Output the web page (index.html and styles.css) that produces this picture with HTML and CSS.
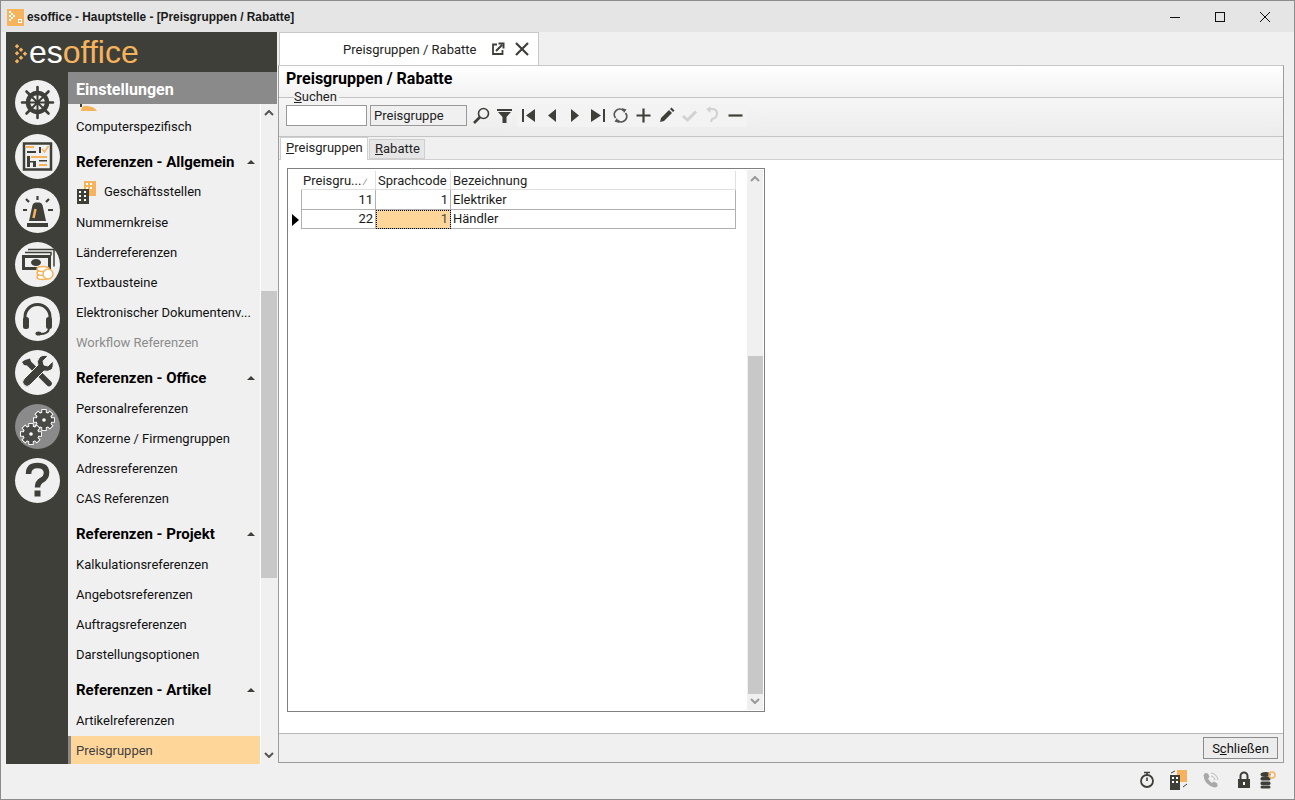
FILE: index.html
```html
<!DOCTYPE html>
<html lang="de">
<head>
<meta charset="utf-8">
<title>esoffice</title>
<link rel="stylesheet" href="styles.css">
</head>
<body>
<div class="window">
  <header class="titlebar">
    <svg class="app-icon" width="17" height="17" viewBox="0 0 17 17"><rect width="17" height="17" fill="#f7b35c"/><g fill="#fff"><rect x="2" y="2" width="2" height="2"/><rect x="4" y="4" width="2" height="2"/><rect x="6" y="6" width="2" height="2"/><rect x="4" y="8" width="2" height="2"/><rect x="2" y="10" width="2" height="2"/><rect x="2" y="6" width="2" height="2"/></g><rect x="11.500" y="10.500" width="3" height="3" fill="none" stroke="#fff"/></svg>
    <span class="title-text">esoffice - Hauptstelle - [Preisgruppen / Rabatte]</span>
    <div class="win-buttons">
      <svg width="12" height="12" viewBox="0 0 12 12"><path d="M1 6.500h10" stroke="#111" fill="none"/></svg>
      <svg width="12" height="12" viewBox="0 0 12 12"><rect x="1.500" y="1.500" width="9" height="9" stroke="#111" fill="none"/></svg>
      <svg width="12" height="12" viewBox="0 0 12 12"><path d="M1 1l10 10M11 1L1 11" stroke="#111" fill="none"/></svg>
    </div>
  </header>

  <div class="workspace">
    <aside class="sidebar">
      <div class="logo-row">
        <svg class="logo-mark" width="14" height="20" viewBox="0 0 14 20"><g fill="#f7b35c"><path d="M3 0l2.200 2.200L3 4.400.8 2.200z"/><path d="M7 3.500l2.200 2.200L7 7.900 4.800 5.700z"/><path d="M11 7.500l2.200 2.200L11 11.900 8.800 9.700z"/><path d="M3 7l2.200 2.200L3 11.400.8 9.200z"/><path d="M7 11.500l2.200 2.200L7 15.900 4.800 13.700z"/><path d="M3 15l2.200 2.200L3 19.400.8 17.200z"/></g></svg>
        <span class="logo-text"><span class="logo-es">es</span>office</span>
      </div>
      <div class="side-body">
        <nav class="rail">
          <div class="rail-btn">
            <svg width="45" height="45" viewBox="0 0 45 45"><g fill="none" stroke="#3f3f3a"><circle cx="22.500" cy="22.500" r="9.500" stroke-width="4.500"/><path d="M22.500 13v19M13 22.500h19M15.800 15.800l13.400 13.400M29.200 15.800L15.800 29.200" stroke-width="2"/><path d="M22.500 7v6M22.500 32v6M7 22.500h6M32 22.500h6M11.500 11.500l4 4M29.500 29.500l4 4M33.500 11.500l-4 4M15.500 29.500l-4 4" stroke-width="2.600" stroke-linecap="round"/></g></svg>
          </div>
          <div class="rail-btn">
            <svg width="45" height="45" viewBox="0 0 45 45"><rect x="9" y="9.500" width="27" height="26" fill="none" stroke="#3f3f3a" stroke-width="2.500"/><g fill="#f7b35c"><rect x="11" y="12" width="8" height="2"/><rect x="16" y="22" width="16" height="2"/><rect x="24" y="30" width="8" height="2"/></g><g fill="#3f3f3a"><rect x="12" y="17" width="9" height="2"/><rect x="12" y="22" width="3" height="11"/><rect x="18" y="27" width="3" height="6"/><rect x="24" y="13" width="2" height="6"/><rect x="12" y="27" width="9" height="1.500"/><rect x="24" y="26" width="8" height="1.500"/></g><path d="M27 15l2.500 3 4-6" fill="none" stroke="#f7b35c" stroke-width="1.500"/></svg>
          </div>
          <div class="rail-btn">
            <svg width="45" height="45" viewBox="0 0 45 45"><path d="M14 33l3.500-16q1-2.500 3-2.500h4q2 0 3 2.500L31 33z" fill="#3f3f3a"/><rect x="12" y="35" width="21" height="4" fill="#3f3f3a"/><path d="M20.500 21l-2 9" stroke="#f7b35c" stroke-width="2.500"/><path d="M22.500 8v4M11 11l3 3M34 11l-3 3M8 22h4M33 22h5" stroke="#3f3f3a" stroke-width="2.200" fill="none"/></svg>
          </div>
          <div class="rail-btn">
            <svg width="45" height="45" viewBox="0 0 45 45"><g fill="none" stroke="#3f3f3a" stroke-width="1.500"><path d="M13 7.500h26v17M10 10.500h26v3"/></g><rect x="7" y="13" width="29" height="15" fill="#3f3f3a"/><rect x="10" y="16" width="23" height="9" fill="#f0f0f0"/><ellipse cx="21" cy="20.500" rx="5" ry="3.500" fill="#3f3f3a"/><g fill="#fff" stroke="#f7b35c" stroke-width="1.500"><ellipse cx="28" cy="35" rx="6" ry="2.500"/><ellipse cx="28" cy="31" rx="6" ry="2.500"/><ellipse cx="28" cy="27" rx="6" ry="2.500"/><circle cx="33" cy="32" r="5"/></g></svg>
          </div>
          <div class="rail-btn">
            <svg width="45" height="45" viewBox="0 0 45 45"><path d="M10 27v-6a12.500 12.500 0 0 1 25 0v6" fill="none" stroke="#3f3f3a" stroke-width="3"/><rect x="8" y="21" width="6" height="12" rx="2.500" fill="#3f3f3a"/><rect x="31" y="21" width="6" height="12" rx="2.500" fill="#3f3f3a"/><path d="M34 33q-1 5-9 5" fill="none" stroke="#3f3f3a" stroke-width="2"/><ellipse cx="23.500" cy="37.500" rx="3" ry="2" fill="#3f3f3a"/></svg>
          </div>
          <div class="rail-btn">
            <svg width="45" height="45" viewBox="0 0 45 45"><path d="M10 10l-3 2 2 3 3 .5 20 20q2 2 4 0t0-4l-20-20-1-3z" fill="#3f3f3a"/><path d="M38 11l-5 5-4-1-1-4 5-5q-6-2-9 2t-1 7L9 29q-3 3 0 6t6 0l14-14q4 1 7-1t2-9z" fill="#3f3f3a" stroke="#f0f0f0" stroke-width="1"/></svg>
          </div>
          <div class="rail-btn rail-btn-active">
            <svg width="45" height="45" viewBox="0 0 45 45"><defs><g id="gear"><circle r="7.500"/><rect x="-1.800" y="-10" width="3.600" height="20"/><rect x="-1.800" y="-10" width="3.600" height="20" transform="rotate(45)"/><rect x="-1.800" y="-10" width="3.600" height="20" transform="rotate(90)"/><rect x="-1.800" y="-10" width="3.600" height="20" transform="rotate(135)"/></g></defs><use href="#gear" transform="translate(29 16)" fill="#fff" stroke="#fff" stroke-width="1.800"/><use href="#gear" transform="translate(29 16)" fill="#4a4a46"/><use href="#gear" transform="translate(16 30)" fill="#fff" stroke="#fff" stroke-width="1.800"/><use href="#gear" transform="translate(16 30)" fill="#4a4a46"/><g fill="#fff"><circle cx="29" cy="16" r="1.800"/><circle cx="16" cy="30" r="1.800"/></g></svg>
          </div>
          <div class="rail-btn">
            <svg width="45" height="45" viewBox="0 0 45 45"><path d="M13.500 16q0-8.500 9-8.500t9 7.500q0 4.500-4.500 7t-4.500 7.500" fill="none" stroke="#3f3f3a" stroke-width="5.500"/><rect x="19.500" y="32.500" width="6" height="6" fill="#3f3f3a"/></svg>
          </div>
        </nav>
        <div class="menu-panel">
          <div class="menu-title">Einstellungen</div>
          <div class="menu-body">
            <div class="menu-list">
              <div class="menu-clip"><svg width="22" height="7" viewBox="0 0 22 7"><path d="M5 7q0-6 7-5t9 5z" fill="#f7b35c"/><rect x="4" y="0" width="2" height="3" fill="#3f3f3a"/></svg></div>
              <div class="menu-item">Computerspezifisch</div>
              <div class="menu-head">Referenzen - Allgemein<span class="tri"></span></div>
              <div class="menu-item menu-item-icon">
                <svg width="22" height="24" viewBox="0 0 22 24"><rect x="8" y="0" width="12" height="15" fill="#f7b35c"/><g fill="#fff"><rect x="10" y="2" width="2" height="2"/><rect x="14" y="2" width="2" height="2"/><rect x="10" y="6" width="2" height="2"/><rect x="14" y="6" width="2" height="2"/></g><rect x="1" y="8" width="12" height="15" fill="#3f3f3a"/><g fill="#fff"><rect x="3" y="10" width="2" height="2"/><rect x="8" y="10" width="2" height="2"/><rect x="3" y="14" width="2" height="2"/><rect x="8" y="14" width="2" height="2"/><rect x="3" y="18" width="2" height="2"/><rect x="8" y="18" width="2" height="2"/></g></svg>
                Geschäftsstellen
              </div>
              <div class="menu-item">Nummernkreise</div>
              <div class="menu-item">Länderreferenzen</div>
              <div class="menu-item">Textbausteine</div>
              <div class="menu-item">Elektronischer Dokumentenv...</div>
              <div class="menu-item menu-item-off">Workflow Referenzen</div>
              <div class="menu-head">Referenzen - Office<span class="tri"></span></div>
              <div class="menu-item">Personalreferenzen</div>
              <div class="menu-item">Konzerne / Firmengruppen</div>
              <div class="menu-item">Adressreferenzen</div>
              <div class="menu-item">CAS Referenzen</div>
              <div class="menu-head">Referenzen - Projekt<span class="tri"></span></div>
              <div class="menu-item">Kalkulationsreferenzen</div>
              <div class="menu-item">Angebotsreferenzen</div>
              <div class="menu-item">Auftragsreferenzen</div>
              <div class="menu-item">Darstellungsoptionen</div>
              <div class="menu-head">Referenzen - Artikel<span class="tri"></span></div>
              <div class="menu-item">Artikelreferenzen</div>
              <div class="menu-item menu-item-active">Preisgruppen</div>
            </div>
            <div class="menu-scroll">
              <svg class="sb-up" width="10" height="6" viewBox="0 0 10 6"><path d="M1 5l4-4 4 4" fill="none" stroke="#555" stroke-width="2"/></svg>
              <div class="menu-thumb"></div>
              <svg class="sb-down" width="10" height="6" viewBox="0 0 10 6"><path d="M1 1l4 4 4-4" fill="none" stroke="#555" stroke-width="2"/></svg>
            </div>
          </div>
        </div>
      </div>
    </aside>

    <main class="main">
      <div class="doc-tabs">
        <div class="doc-tab">
          <span class="doc-tab-label">Preisgruppen / Rabatte</span>
          <svg width="14" height="14" viewBox="0 0 14 14"><path d="M6 2.500H2v9.500h9.500V8" fill="none" stroke="#3f3f3a" stroke-width="1.800"/><path d="M5 9l6-6M7.500 1.500H12.500V6.500" fill="none" stroke="#3f3f3a" stroke-width="2"/></svg>
          <svg width="14" height="14" viewBox="0 0 14 14"><path d="M1 1l12 12M13 1L1 13" fill="none" stroke="#3f3f3a" stroke-width="2.200"/></svg>
        </div>
      </div>
      <div class="doc-panel">
        <div class="doc-head">
          <h1 class="doc-title">Preisgruppen / Rabatte</h1>
          <div class="search-legend"><span class="legend-text"><u>S</u>uchen</span></div>
        </div>
        <div class="toolbar">
          <div class="search-input"></div>
          <div class="search-field">Preisgruppe</div>
          <svg class="tool" width="23" height="23" viewBox="0 0 23 23"><circle cx="13.500" cy="9.500" r="5" fill="none" stroke="#3f3f3a" stroke-width="1.600"/><path d="M10 13l-6 6" stroke="#3f3f3a" stroke-width="2.600"/></svg>
          <svg class="tool" width="23" height="23" viewBox="0 0 23 23"><path d="M4 5h15v2H4zM5 8h13l-4.500 5v6h-4v-6z" fill="#3f3f3a"/></svg>
          <div class="nav-tools">
            <svg class="tool" width="23" height="23" viewBox="0 0 23 23"><path d="M5 5h2v13H5zM18 5v13l-9-6.500z" fill="#3f3f3a"/></svg>
            <svg class="tool" width="23" height="23" viewBox="0 0 23 23"><path d="M16 5v13l-8-6.500z" fill="#3f3f3a"/></svg>
            <svg class="tool" width="23" height="23" viewBox="0 0 23 23"><path d="M8 5v13l8-6.500z" fill="#3f3f3a"/></svg>
            <svg class="tool" width="23" height="23" viewBox="0 0 23 23"><path d="M17 5h2v13h-2zM5 5v13l10-6.500z" fill="#3f3f3a"/></svg>
            <svg class="tool" width="23" height="23" viewBox="0 0 23 23"><path d="M6.500 14a5.500 5.500 0 0 1 8-7.500M16.500 9a5.500 5.500 0 0 1-8 7.500" fill="none" stroke="#555" stroke-width="1.800"/><path d="M13 4l4.500 1.500L15 9zM10 19l-4.500-1.500L8 14z" fill="#555"/></svg>
            <svg class="tool" width="23" height="23" viewBox="0 0 23 23"><path d="M4.500 11.500h14M11.500 4.500v14" stroke="#3f3f3a" stroke-width="2.200"/></svg>
            <svg class="tool" width="23" height="23" viewBox="0 0 23 23"><path d="M5 18l1-4 8-8 3 3-8 8z" fill="#3f3f3a"/><path d="M15 5l1.500-1.500 3 3L18 8z" fill="#3f3f3a"/></svg>
            <svg class="tool" width="23" height="23" viewBox="0 0 23 23"><path d="M5 12l4.500 4L18 7.500" fill="none" stroke="#d2d2d2" stroke-width="3"/></svg>
            <svg class="tool" width="23" height="23" viewBox="0 0 23 23"><path d="M6 5h5q5 0 5 4.500T11 15l-1 3" fill="none" stroke="#d2d2d2" stroke-width="2.200"/><path d="M9.500 2v7L5.500 5.500z" fill="#d2d2d2"/></svg>
            <svg class="tool" width="23" height="23" viewBox="0 0 23 23"><path d="M4.500 11.500h14" stroke="#3f3f3a" stroke-width="2.200"/></svg>
          </div>
        </div>
        <div class="sub-tabs">
          <div class="sub-tab sub-tab-active"><u>P</u>reisgruppen</div>
          <div class="sub-tab sub-tab-plain"><u>R</u>abatte</div>
        </div>
        <div class="tab-page">
          <div class="grid-box">
            <div class="grid">
              <div class="grid-row grid-header">
                <div class="cell-ind"></div>
                <div class="cell cell-a">Preisgru...<span class="sort">∕</span></div>
                <div class="cell cell-b">Sprachcode</div>
                <div class="cell cell-c">Bezeichnung</div>
              </div>
              <div class="grid-row grid-row-tall">
                <div class="cell-ind"></div>
                <div class="cell cell-a cell-num">11</div>
                <div class="cell cell-b cell-num">1</div>
                <div class="cell cell-c">Elektriker</div>
              </div>
              <div class="grid-row">
                <div class="cell-ind"><span class="row-marker"></span></div>
                <div class="cell cell-a cell-num">22</div>
                <div class="cell cell-b cell-num cell-focus">1</div>
                <div class="cell cell-c">Händler</div>
              </div>
            </div>
            <div class="grid-scroll">
              <svg class="sb-up" width="10" height="6" viewBox="0 0 10 6"><path d="M1 5l4-4 4 4" fill="none" stroke="#999" stroke-width="2"/></svg>
              <div class="grid-thumb"></div>
              <svg class="sb-down" width="10" height="6" viewBox="0 0 10 6"><path d="M1 1l4 4 4-4" fill="none" stroke="#999" stroke-width="2"/></svg>
            </div>
          </div>
        </div>
        <div class="doc-foot"><button class="close-btn" type="button">S<u>c</u>hließen</button></div>
      </div>
    </main>
  </div>

  <footer class="statusbar">
    <svg width="18" height="18" viewBox="0 0 18 18"><circle cx="9" cy="10" r="6" fill="none" stroke="#3f3f3a" stroke-width="1.800"/><path d="M6 1.500h6M9 2v3M9 6.500V10" stroke="#3f3f3a" stroke-width="1.600" fill="none"/></svg>
    <svg width="22" height="20" viewBox="0 0 22 20"><rect x="9" y="0" width="10" height="12" fill="#f7b35c"/><rect x="2" y="5" width="10" height="15" fill="#3f3f3a"/><g fill="#fff"><rect x="4" y="7" width="2" height="2"/><rect x="8" y="7" width="2" height="2"/><rect x="4" y="11" width="2" height="2"/><rect x="8" y="11" width="2" height="2"/></g><path d="M15 17l4-3M3 3l4-2" stroke="#3f3f3a" fill="none"/></svg>
    <svg width="18" height="18" viewBox="0 0 18 18"><path d="M3 2l3 .5 1.500 3.500-1.500 1.500q1.500 3 4 4.500l1.800-1.500 3.500 2 .2 2.500q-1 1.500-3 1.500Q2.500 14 1.500 4.500 2 3 3 2z" fill="#a8a8a8"/><path d="M9 2q6 1 7 7M9 5q3 .5 4 4" fill="none" stroke="#c4c4c4" stroke-width="1.200"/></svg>
    <svg class="status-lock" width="16" height="18" viewBox="0 0 16 18"><path d="M4.500 8V5a3.500 3.500 0 0 1 7 0v3" fill="none" stroke="#3f3f3a" stroke-width="2"/><rect x="2" y="8" width="12" height="9" fill="#3f3f3a"/><rect x="7" y="11" width="2" height="3" fill="#fff"/></svg>
    <svg class="status-db" width="18" height="18" viewBox="0 0 18 18"><g fill="#3f3f3a"><ellipse cx="6.500" cy="3.500" rx="5" ry="2.500"/><rect x="1.500" y="6" width="10" height="3.500" rx="1.500"/><rect x="1.500" y="10.500" width="10" height="3.500" rx="1.500"/><rect x="1.500" y="14.500" width="10" height="3" rx="1.500"/></g><circle cx="13" cy="4" r="3" fill="none" stroke="#f7b35c" stroke-width="1.500"/></svg>
  </footer>
</div>
</body>
</html>
```
FILE: styles.css
```css
* { box-sizing: border-box; }
html, body { margin: 0; padding: 0; }
body {
  font-family: Roboto, "Liberation Sans", sans-serif;
  font-size: 13px;
  color: #000;
  background: #f0f0f0;
}
.window {
  width: 1295px;
  height: 800px;
  display: flex;
  flex-direction: column;
  border: 1px solid #8c8c8c;
  background: #f0f0f0;
  overflow: hidden;
}
.titlebar {
  height: 31px;
  flex: none;
  display: flex;
  align-items: center;
  padding-left: 6px;
  background: #e5e5e5;
}
.app-icon { flex: none; margin-top: 1px; }
.title-text {
  margin-left: 3px;
  font-family: "Liberation Sans", sans-serif;
  font-weight: 700;
  font-size: 11.85px;
  color: #1a1a1a;
}
.win-buttons {
  margin-left: auto;
  display: flex;
  gap: 33px;
  padding-right: 23px;
}
.workspace { flex: 1; display: flex; min-height: 0; }
.sidebar {
  width: 271px;
  margin-left: 5px;
  flex: none;
  display: flex;
  flex-direction: column;
  background: #3f3f3a;
}
.logo-row {
  height: 40px;
  flex: none;
  display: flex;
  align-items: center;
  padding-left: 8px;
}
.logo-mark { flex: none; margin-top: 3px; }
.logo-text {
  margin-left: 1px;
  font-family: "Liberation Sans", sans-serif;
  font-size: 32px;
  line-height: 40px;
  color: #f7b35c;
}
.logo-es { color: #fff; }
.side-body { flex: 1; display: flex; min-height: 0; }
.rail {
  width: 62px;
  flex: none;
  display: flex;
  flex-direction: column;
  align-items: center;
  gap: 9px;
  padding-top: 8px;
}
.rail-btn {
  width: 45px;
  height: 45px;
  border-radius: 50%;
  background: #f0f0f0;
  flex: none;
}
.rail-btn svg { display: block; }
.rail-btn-active { background: #8a8a8a; }
.menu-panel {
  flex: 1;
  min-width: 0;
  display: flex;
  flex-direction: column;
  background: #f0f0f0;
}
.menu-title {
  height: 32px;
  flex: none;
  padding-left: 8px;
  background: #8a8a8a;
  color: #fff;
  font-weight: 700;
  font-size: 16px;
  line-height: 35px;
}
.menu-body { flex: 1; display: flex; min-height: 0; }
.menu-list {
  width: 192px;
  flex: none;
  display: flex;
  flex-direction: column;
  overflow: hidden;
}
.menu-clip { height: 7px; flex: none; overflow: hidden; padding-left: 8px; }
.menu-clip svg { display: block; }
.menu-item {
  height: 28px;
  flex: none;
  margin: 1px 0;
  padding-left: 8px;
  line-height: 30px;
  white-space: nowrap;
  color: #111;
}
.menu-item-icon { display: flex; align-items: center; gap: 6px; line-height: 30px; }
.menu-item-icon svg { flex: none; margin-top: 1px; }
.menu-item-off { color: #8c8c8c; }
.menu-item-active {
  background: #ffd699;
  border-left: 3px solid #8a8a8a;
  padding-left: 5px;
  color: #404040;
}
.menu-head {
  height: 30px;
  flex: none;
  margin-top: 6px;
  padding: 0 5px 0 8px;
  display: flex;
  align-items: center;
  justify-content: space-between;
  font-weight: 700;
  font-size: 15px;
  color: #000;
  white-space: nowrap;
}
.tri {
  width: 0;
  height: 0;
  border-left: 4px solid transparent;
  border-right: 4px solid transparent;
  border-bottom: 4px solid #3f3f3a;
}
.menu-scroll {
  width: 17px;
  flex: none;
  position: relative;
  border-left: 1px solid #fff;
  background: #f0f0f0;
}
.sb-up { position: absolute; top: 6px; left: 3px; }
.sb-down { position: absolute; bottom: 6px; left: 3px; }
.menu-thumb {
  position: absolute;
  left: 0;
  top: 187px;
  width: 16px;
  height: 287px;
  background: #c8c8c8;
}
.main {
  flex: 1;
  min-width: 0;
  display: flex;
  flex-direction: column;
  padding: 0 10px 1px 1px;
}
.doc-tabs { height: 33px; flex: none; padding-left: 1px; }
.doc-tab {
  width: 260px;
  height: 33px;
  display: flex;
  align-items: center;
  padding-left: 63px;
  gap: 10px;
  background: #fff;
  border: 1px solid #c8c8c8;
  border-bottom: 0;
  color: #222;
}
.doc-tab-label { margin-right: 5px; }
.doc-panel {
  flex: 1;
  min-height: 0;
  display: flex;
  flex-direction: column;
  border: 1px solid #9c9c9c;
  border-top-color: #c8c8c8;
  background: #f0f0f0;
}
.doc-head {
  height: 31px;
  flex: none;
  position: relative;
  background: linear-gradient(#fff, #f2f2f2);
}
.doc-title {
  margin: 0;
  padding: 3px 0 0 7px;
  font-size: 16px;
  font-weight: 700;
  line-height: 20px;
}
.search-legend {
  position: absolute;
  left: 15px;
  top: 24px;
  height: 14px;
  z-index: 1;
}
.legend-text { display: block; line-height: 14px; color: #222; background: #f2f2f2; padding: 0 2px 0 0; }
.toolbar {
  height: 40px;
  flex: none;
  display: flex;
  align-items: center;
  padding: 0 0 3px 7px;
  border-top: 1px solid #c4c4c4;
  border-bottom: 1px solid #c4c4c4;
  background: linear-gradient(#f6f6f6, #ececec);
}
.search-input {
  width: 81px;
  height: 21px;
  background: #fff;
  border: 1px solid #999;
}
.search-field {
  width: 97px;
  height: 21px;
  margin-left: 3px;
  margin-right: 3px;
  padding-left: 3px;
  line-height: 19px;
  background: #f0f0f0;
  border: 1px solid #999;
  color: #222;
}
.tool { flex: none; display: block; }
.nav-tools {
  display: flex;
  align-items: center;
  margin-left: 1px;
  height: 23px;
  background: #f3f3f3;
}
.sub-tabs {
  height: 23px;
  flex: none;
  display: flex;
  align-items: flex-end;
  padding-left: 1px;
  gap: 1px;
  background: #f0f0f0;
  border-bottom: 1px solid #d0d0d0;
}
.sub-tab {
  height: 20px;
  padding: 0 5px;
  line-height: 18px;
  background: #e6e6e6;
  border: 1px solid #d0d0d0;
  color: #222;
}
.sub-tab-plain { width: 56px; }
.sub-tab-active {
  width: 88px;
  height: 23px;
  margin-bottom: -1px;
  line-height: 20px;
  background: #fff;
  border-bottom: 0;
}
.tab-page {
  flex: 1;
  min-height: 0;
  padding: 8px 0 0 8px;
  background: #fff;
  border-bottom: 1px solid #b8b8b8;
}
.grid-box {
  width: 478px;
  height: 544px;
  display: flex;
  justify-content: space-between;
  padding: 1px;
  border: 1px solid #808080;
  background: #fff;
}
.grid { width: 447px; flex: none; padding-top: 1px; }
.grid-row { height: 19px; display: flex; }
.grid-row-tall { height: 20px; }
.grid-header { height: 19px; }
.cell-ind {
  width: 12px;
  flex: none;
  display: flex;
  align-items: center;
  justify-content: center;
  background: #fff;
}
.row-marker {
  width: 0;
  height: 0;
  margin-left: 1px;
  border-left: 7px solid #000;
  border-top: 6px solid transparent;
  border-bottom: 6px solid transparent;
}
.cell {
  padding: 0 2px;
  line-height: 18px;
  border-right: 1px solid #b0b0b0;
  border-bottom: 1px solid #b0b0b0;
  white-space: nowrap;
  color: #1a1a1a;
}
.grid-row-tall .cell { line-height: 20px; }
.grid-header .cell {
  line-height: 19px;
  border-right: 1px solid #e0e0e0;
  border-bottom: 1px solid #e0e0e0;
  color: #222;
}
.cell-a { width: 75px; flex: none; }
.cell-b { width: 75px; flex: none; }
.cell-c { flex: 1; }
.grid-row:not(.grid-header) .cell-a { border-left: 1px solid #b0b0b0; }
.cell-num { text-align: right; }
.cell-focus { background: #ffd699; outline: 1px dotted #000; outline-offset: -1px; color: #4a4a4a; }
.sort { margin-left: 3px; font-size: 9px; color: #666; }
.grid-scroll {
  width: 16px;
  flex: none;
  position: relative;
  background: #f0f0f0;
}
.grid-thumb {
  position: absolute;
  left: 1px;
  top: 186px;
  width: 15px;
  height: 338px;
  background: #c8c8c8;
}
.doc-foot {
  height: 28px;
  flex: none;
  display: flex;
  justify-content: flex-end;
  align-items: flex-start;
  padding: 3px 5px 0 0;
  background: #f0f0f0;
}
.close-btn {
  width: 75px;
  height: 22px;
  padding: 0;
  font: inherit;
  color: #111;
  background: #ececec;
  border: 1px solid #8c8c8c;
}
.statusbar {
  height: 35px;
  flex: none;
  display: flex;
  align-items: center;
  justify-content: flex-end;
  gap: 12px;
  padding: 0 17px 4px 0;
  background: #f0f0f0;
}
.statusbar svg { flex: none; }
.status-lock { margin-left: 4px; }
.status-db { margin-left: -5px; }
```
